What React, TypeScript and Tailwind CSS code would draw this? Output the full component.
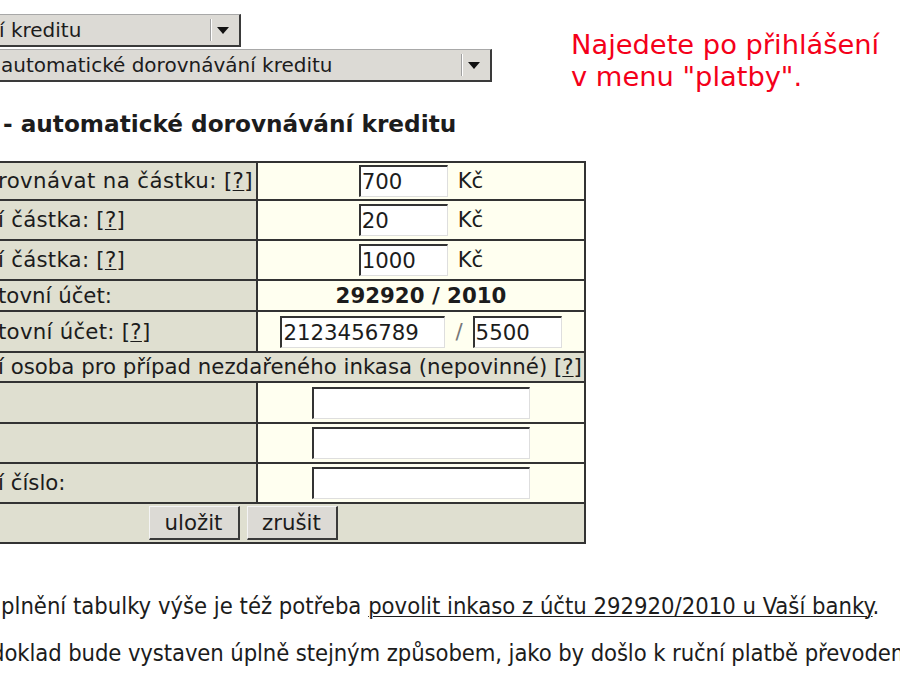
import type { ReactNode } from "react";

const line = "border-[#333]";

function Select({ width, pad, children }: { width: string; pad: string; children: ReactNode }) {
  return (
    <div
      className={`flex h-[33px] ml-[-6px] border-t border-l border-b-2 border-r-2 border-[#a8a8a8] border-b-[#3a3a3a] border-r-[#3a3a3a] bg-[#dcdad5] ${width}`}
    >
      <span className={`flex-1 overflow-hidden whitespace-nowrap text-[20px] leading-[30px] ${pad}`}>{children}</span>
      <span className="my-[4px] w-[2px] border-l border-[#a0a0a0] bg-white" />
      <span className="flex w-[27px] items-center justify-center pr-[5px]">
        <svg width="12" height="7" viewBox="0 0 12 7">
          <path d="M0 0h12L6 7z" fill="#111" />
        </svg>
      </span>
    </div>
  );
}

function Field({ w, value }: { w: string; value: string }) {
  return (
    <input
      readOnly
      defaultValue={value}
      className={`h-[32px] border-t-2 border-l-2 border-b border-r border-[#333] border-b-[#dedede] border-r-[#dedede] bg-white px-[1px] text-[21.3px] text-[#1c1c1c] outline-none ${w}`}
    />
  );
}

function Help() {
  return (
    <span>
      [<span className="underline decoration-1 underline-offset-2">?</span>]
    </span>
  );
}

function Row({ h, last, children }: { h: string; last?: boolean; children: ReactNode }) {
  return <div className={`flex ${h} ${last ? "" : `border-b-2 ${line}`}`}>{children}</div>;
}

function Label({ wide, children }: { wide?: string; children?: ReactNode }) {
  return (
    <div
      className={`flex w-[356px] shrink-0 items-center whitespace-nowrap border-r-2 ${line} bg-[#dfdfd0] pl-[96px] ${wide ?? ""}`}
    >
      {children}
    </div>
  );
}

function Value({ children }: { children: ReactNode }) {
  return <div className="flex flex-1 items-center justify-center bg-[#fffff0]">{children}</div>;
}

function Btn({ children }: { children: ReactNode }) {
  return (
    <button
      type="button"
      className="h-[34px] w-[91px] border-t border-l border-b-2 border-r-2 border-[#f4f4f4] border-b-[#3a3a3a] border-r-[#3a3a3a] bg-[#dcdad5] text-[21.3px] text-[#1c1c1c]"
    >
      {children}
    </button>
  );
}

export default function App() {
  return (
    <div className="relative h-[700px] w-[900px] overflow-hidden bg-white font-['DejaVu_Sans',sans-serif] text-[#1c1c1c]">
      <div className="flex">
        <div className="w-[571px] shrink-0 pt-[14px]">
          <Select width="w-[247px]" pad="pl-[4px]">
            í kreditu
          </Select>
          <div className="mt-[2px]">
            <Select width="w-[498px]" pad="pl-[6px]">
              automatické dorovnávání kreditu
            </Select>
          </div>

          <h3 className="ml-[3px] mt-[27px] whitespace-nowrap text-[23.2px] font-bold leading-[30px]">
            - automatické dorovnávání kreditu
          </h3>

          <div className={`ml-[-100px] mt-[22px] w-[686px] border-2 ${line} text-[21.3px]`}>
            <Row h="h-[38px]">
              <Label wide="tracking-[0.4px]">
                rovnávat na částku:&nbsp;<Help />
              </Label>
              <Value>
                <Field w="w-[89px]" value="700" />
                <span className="ml-[10px]">Kč</span>
              </Value>
            </Row>
            <Row h="h-[40px]">
              <Label wide="tracking-[0.25px]">
                í částka:&nbsp;<Help />
              </Label>
              <Value>
                <Field w="w-[89px]" value="20" />
                <span className="ml-[10px]">Kč</span>
              </Value>
            </Row>
            <Row h="h-[40px]">
              <Label wide="tracking-[0.25px]">
                í částka:&nbsp;<Help />
              </Label>
              <Value>
                <Field w="w-[89px]" value="1000" />
                <span className="ml-[10px]">Kč</span>
              </Value>
            </Row>
            <Row h="h-[31px]">
              <Label>tovní účet:</Label>
              <Value>
                <span className="font-bold">292920 / 2010</span>
              </Value>
            </Row>
            <Row h="h-[41px]">
              <Label wide="tracking-[0.25px]">
                tovní účet:&nbsp;<Help />
              </Label>
              <Value>
                <Field w="w-[165px]" value="2123456789" />
                <span className="mx-[10px] text-[#777]">/</span>
                <Field w="w-[89px]" value="5500" />
              </Value>
            </Row>
            <Row h="h-[30px]">
              <div className="flex flex-1 items-center whitespace-nowrap bg-[#dfdfd0] pl-[96px]">
                í osoba pro případ nezdařeného inkasa (nepovinné)&nbsp;<Help />
              </div>
            </Row>
            <Row h="h-[41px]">
              <Label />
              <Value>
                <Field w="w-[218px]" value="" />
              </Value>
            </Row>
            <Row h="h-[40px]">
              <Label />
              <Value>
                <Field w="w-[218px]" value="" />
              </Value>
            </Row>
            <Row h="h-[40px]">
              <Label>í číslo:</Label>
              <Value>
                <Field w="w-[218px]" value="" />
              </Value>
            </Row>
            <Row h="h-[38px]" last>
              <div className="flex flex-1 items-center justify-center gap-[7px] bg-[#dfdfd0]">
                <Btn>uložit</Btn>
                <Btn>zrušit</Btn>
              </div>
            </Row>
          </div>

          <div className="font-['DejaVu_Sans_Condensed','DejaVu_Sans',sans-serif] text-[23.6px] leading-[27px] [font-stretch:condensed]">
            <p className="ml-[1px] mt-[49px] whitespace-nowrap">
              plnění tabulky výše je též potřeba{" "}
              <a href="#" className="underline decoration-1 underline-offset-2">
                povolit inkaso z účtu 292920/2010 u Vaší banky
              </a>
              .
            </p>
            <p className="ml-[-9px] mt-[20px] whitespace-nowrap tracking-[-0.1px]">
              doklad bude vystaven úplně stejným způsobem, jako by došlo k ruční platbě převodem.
            </p>
          </div>
        </div>

        <div className="pt-[29px] text-[27.3px] leading-[32px] text-[#f4001a]">
          <p className="whitespace-nowrap">Najedete po přihlášení</p>
          <p className="whitespace-nowrap">v menu "platby".</p>
        </div>
      </div>
    </div>
  );
}
